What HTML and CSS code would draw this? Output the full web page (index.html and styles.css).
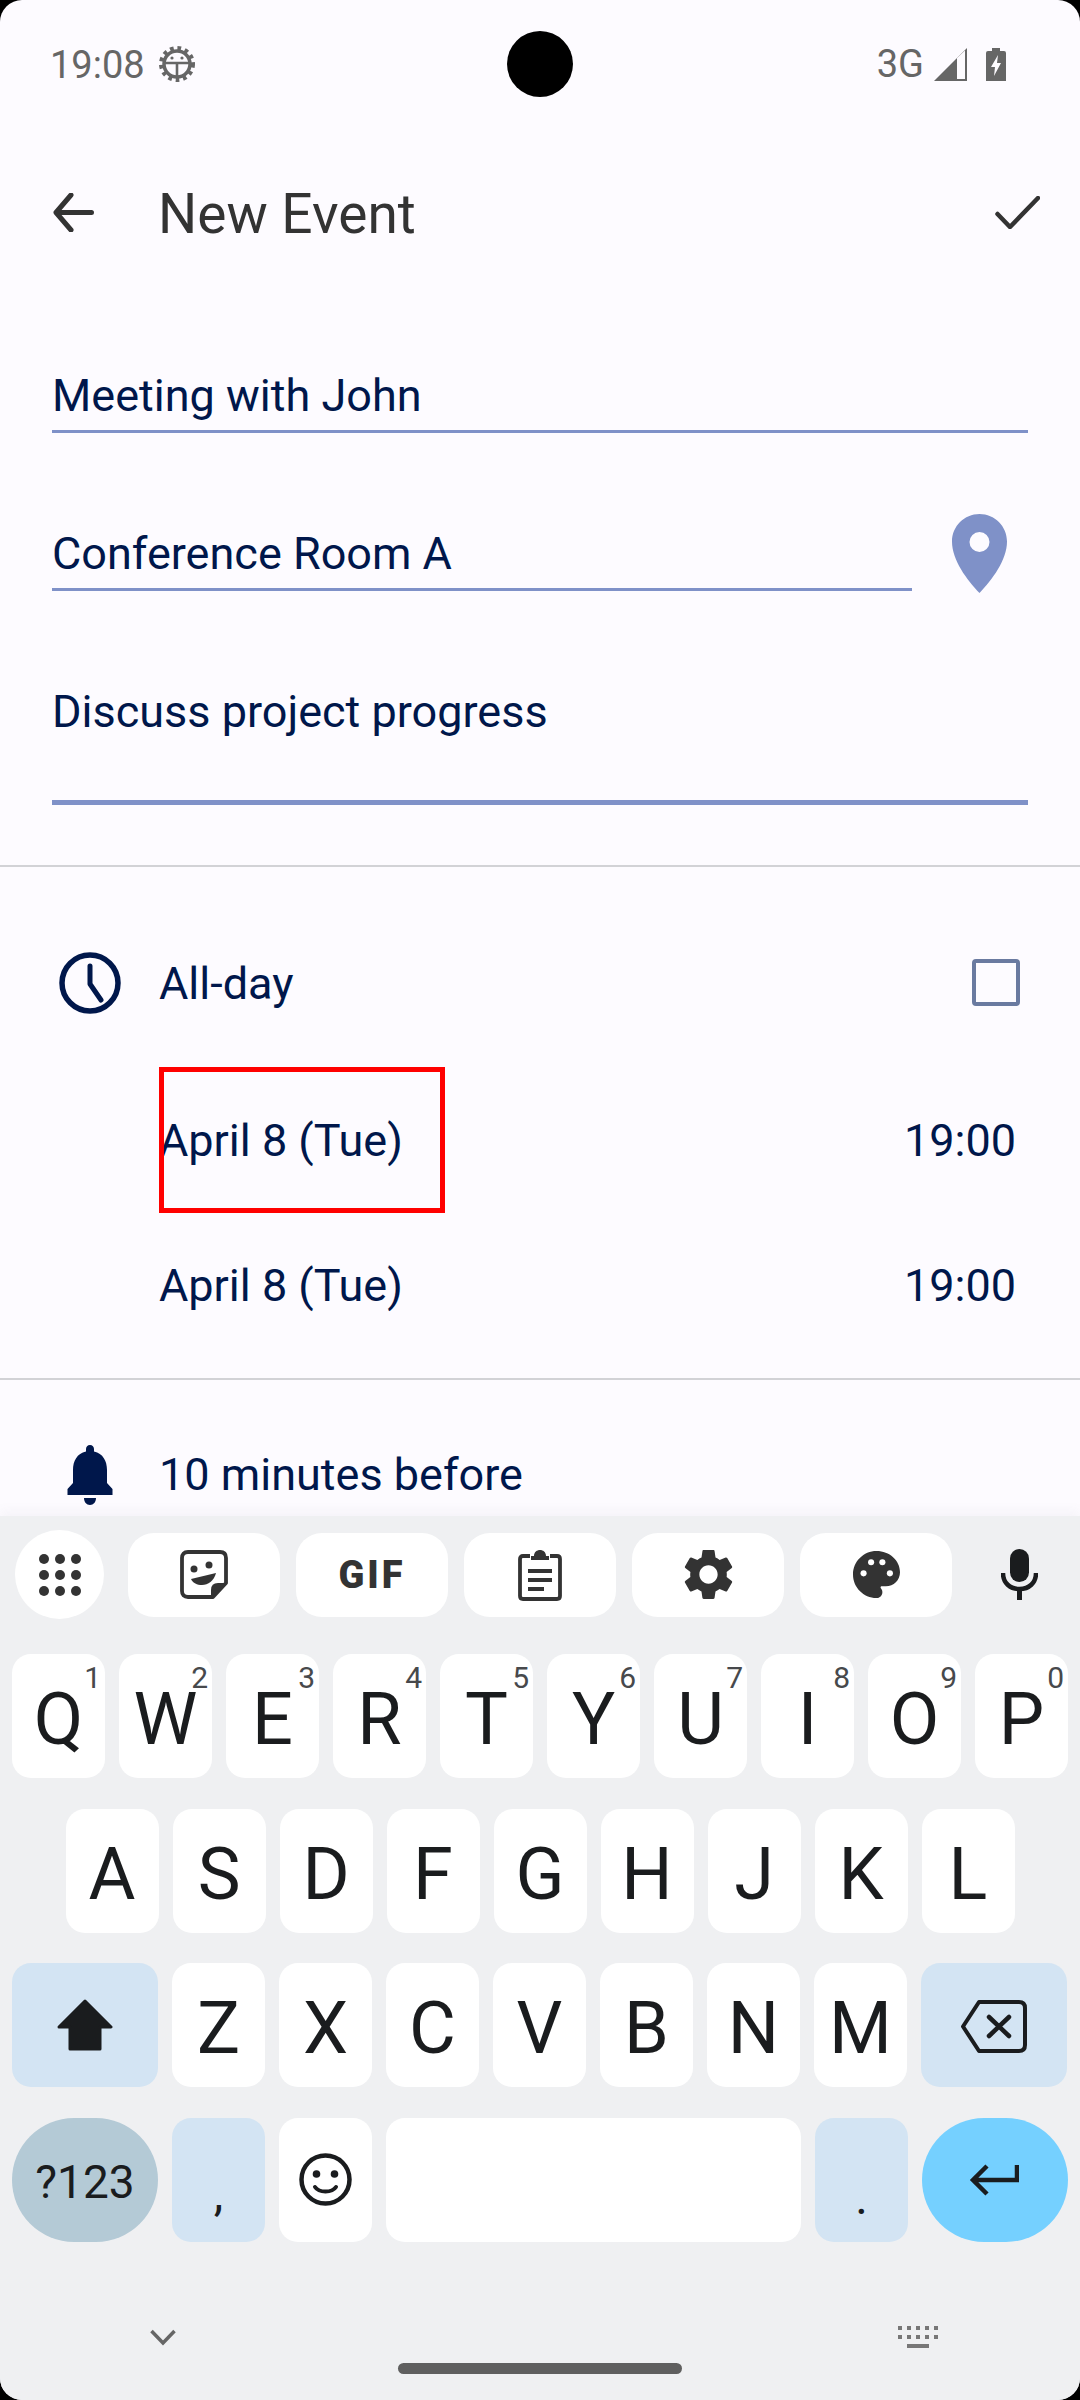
FILE: index.html
```html
<!DOCTYPE html>
<html lang="en">
<head>
<meta charset="utf-8">
<title>New Event</title>
<link rel="stylesheet" href="styles.css">
</head>
<body>
<div class="screen">
  <div class="content">
    <div class="statusbar">
      <span class="clock-text">19:08</span>
      <svg class="gear-status" viewBox="0 0 36 38"><circle cx="18" cy="19" r="15.5" fill="none" stroke="#666" stroke-width="5" stroke-dasharray="3.6 3.7"/><circle cx="18" cy="19" r="13" fill="none" stroke="#666" stroke-width="3.5"/><path d="M5 18H31M18 18V32" fill="none" stroke="#666" stroke-width="2.6"/><circle cx="13" cy="13" r="1.6" fill="#666"/><circle cx="23" cy="13" r="1.6" fill="#666"/></svg>
      <div class="camera"></div>
      <span class="net-text">3G</span>
      <svg class="signal" viewBox="0 0 33 33"><path d="M0 33L33 0V33Z" fill="#666"/><path d="M23 10L31 2.500V31H23Z" fill="#fdfbff"/></svg>
      <svg class="battery" viewBox="0 0 20 33"><path d="M6 0H14V3H18Q20 3 20 5V33H0V5Q0 3 2 3H6Z" fill="#666"/><path d="M12 7L5 19H9L8 28L15 15H11Z" fill="#fdfbff"/></svg>
    </div>

    <div class="appbar">
      <svg class="back" viewBox="0 0 41 39"><path d="M38.5 19.5H4M18 2L3 19.5L18 37" fill="none" stroke="#333" stroke-width="5" stroke-linecap="round" stroke-linejoin="round"/></svg>
      <span class="title">New Event</span>
      <svg class="done" viewBox="0 0 45 33"><path d="M2.5 18L15 31L43 2" fill="none" stroke="#333" stroke-width="4.500" stroke-linecap="round" stroke-linejoin="round"/></svg>
    </div>

    <div class="form">
      <div class="field">Meeting with John</div>
      <div class="field-row">
        <div class="field field-grow">Conference Room A</div>
        <svg class="pin" viewBox="0 0 55 79"><path fill-rule="evenodd" d="M27.5 0C12.3 0 0 12.3 0 27.5C0 46 15 66 27.5 79C40 66 55 46 55 27.5C55 12.3 42.7 0 27.5 0ZM27.5 18A10 10 0 1 1 27.5 38A10 10 0 1 1 27.5 18Z" fill="#7f91c8"/></svg>
      </div>
      <div class="field field-multi">Discuss project progress</div>
    </div>

    <div class="divider divider-first"></div>

    <div class="row row-allday">
      <svg class="row-icon" viewBox="0 0 62 62"><circle cx="31" cy="31" r="28" fill="none" stroke="#00174b" stroke-width="5.5"/><path d="M31 14V32L42 48" fill="none" stroke="#00174b" stroke-width="5" stroke-linecap="round" stroke-linejoin="round"/></svg>
      <span class="row-label">All-day</span>
      <span class="checkbox"></span>
    </div>
    <div class="row row-date">
      <span class="row-label row-label-plain">April 8 (Tue)</span>
      <span class="time">19:00</span>
      <div class="highlight"></div>
    </div>
    <div class="row row-date-end">
      <span class="row-label row-label-plain">April 8 (Tue)</span>
      <span class="time">19:00</span>
    </div>

    <div class="divider divider-second"></div>

    <div class="row row-reminder">
      <svg class="row-icon bell" viewBox="0 0 48 60"><path d="M24 0C21.5 0 20 1.8 20 4V6.500C11 8.500 7 16 7 25V38L1.500 44V50H46.500V44L41 38V25C41 16 37 8.500 28 6.500V4C28 1.800 26.500 0 24 0ZM18 53C18 57 20.500 60 24 60C27.500 60 30 57 30 53Z" fill="#00174b"/></svg>
      <span class="row-label">10 minutes before</span>
    </div>
  </div>

  <div class="keyboard">
    <div class="toolbar">
      <div class="tool-circle">
        <svg class="ic-apps" viewBox="0 0 42 42" fill="#333"><circle cx="5" cy="5" r="5"/><circle cx="21" cy="5" r="5"/><circle cx="37" cy="5" r="5"/><circle cx="5" cy="21" r="5"/><circle cx="21" cy="21" r="5"/><circle cx="37" cy="21" r="5"/><circle cx="5" cy="37" r="5"/><circle cx="21" cy="37" r="5"/><circle cx="37" cy="37" r="5"/></svg>
      </div>
      <div class="tool-btn">
        <svg class="ic-sticker" viewBox="0 0 48 49"><path d="M8 2H40Q46 2 46 8V33L33 47H8Q2 47 2 41V8Q2 2 8 2Z" fill="none" stroke="#333" stroke-width="3.800" stroke-linejoin="round"/><path d="M46 33H38Q31 33 31 40V47Z" fill="#333"/><circle cx="14" cy="19" r="3.500" fill="#333"/><circle cx="29" cy="15" r="3.500" fill="#333"/><path d="M11 29L36 23C34 31 28 35 22 35C17 35 13 33 11 29Z" fill="#333"/></svg>
      </div>
      <div class="tool-btn"><span class="gif">GIF</span></div>
      <div class="tool-btn">
        <svg class="ic-clip" viewBox="0 0 44 52"><path d="M12 7H5Q2 7 2 10V47Q2 50 5 50H39Q42 50 42 47V10Q42 7 39 7H32" fill="none" stroke="#333" stroke-width="3.800"/><path d="M13 11V7H16C16 3 19 1 22 1C25 1 28 3 28 7H31V11Z" fill="#333"/><path d="M10 20H34V24H10ZM10 29H34V33H10ZM10 38H26V42H10Z" fill="#333"/></svg>
      </div>
      <div class="tool-btn">
        <svg class="ic-gear" viewBox="0 0 24 24"><path fill="#333" d="M19.14 12.94c.04-.3.06-.61.06-.94 0-.32-.02-.64-.07-.94l2.03-1.58c.18-.14.23-.41.12-.61l-1.920-3.320c-.12-.22-.37-.29-.59-.22l-2.390.96c-.5-.38-1.030-.7-1.620-.94l-.36-2.540c-.04-.24-.24-.41-.48-.41h-3.840c-.24 0-.43.17-.47.41l-.36 2.540c-.59.24-1.130.57-1.620.94l-2.390-.96c-.22-.08-.47 0-.59.22L2.740 8.870c-.12.21-.08.47.12.61l2.030 1.580c-.05.3-.09.63-.09.94s.02.64.07.94l-2.030 1.580c-.18.14-.23.41-.12.61l1.920 3.320c.12.22.37.29.59.22l2.390-.96c.5.38 1.030.7 1.620.94l.36 2.540c.05.24.24.41.48.41h3.840c.24 0 .44-.17.47-.41l.36-2.540c.59-.24 1.130-.56 1.620-.94l2.390.96c.22.08.47 0 .59-.22l1.920-3.320c.12-.22.07-.47-.12-.61l-2.010-1.580zM12 15.600c-1.980 0-3.600-1.620-3.600-3.600s1.620-3.600 3.600-3.600 3.600 1.620 3.600 3.600-1.620 3.600-3.600 3.600z"/></svg>
      </div>
      <div class="tool-btn">
        <svg class="ic-palette" viewBox="2 2 20 20"><path fill="#333" d="M12 2C6.490 2 2 6.490 2 12s4.490 10 10 10c1.380 0 2.500-1.120 2.500-2.500 0-.61-.23-1.200-.64-1.670-.08-.1-.13-.21-.13-.33 0-.28.22-.5.5-.5H16c3.310 0 6-2.690 6-6 0-4.960-4.490-9-10-9z"/><circle cx="6.500" cy="11.500" r="1.300" fill="#fff"/><circle cx="9.700" cy="6.800" r="1.300" fill="#fff"/><circle cx="14.500" cy="6.800" r="1.300" fill="#fff"/><circle cx="17.700" cy="11.500" r="1.300" fill="#fff"/></svg>
      </div>
      <svg class="ic-mic" viewBox="0 0 37 51"><rect x="9" y="0" width="19" height="33" rx="9.500" fill="#1a1c1e"/><path d="M2 24C2 34 9 40 18.500 40C28 40 35 34 35 24" fill="none" stroke="#1a1c1e" stroke-width="4.500"/><path d="M18.500 40V51" stroke="#1a1c1e" stroke-width="5"/></svg>
    </div>

    <div class="keys">
      <div class="key-row">
        <div class="key">Q<sup class="hint">1</sup></div>
        <div class="key">W<sup class="hint">2</sup></div>
        <div class="key">E<sup class="hint">3</sup></div>
        <div class="key">R<sup class="hint">4</sup></div>
        <div class="key">T<sup class="hint">5</sup></div>
        <div class="key">Y<sup class="hint">6</sup></div>
        <div class="key">U<sup class="hint">7</sup></div>
        <div class="key">I<sup class="hint">8</sup></div>
        <div class="key">O<sup class="hint">9</sup></div>
        <div class="key">P<sup class="hint">0</sup></div>
      </div>
      <div class="key-row key-row-inset">
        <div class="key">A</div><div class="key">S</div><div class="key">D</div><div class="key">F</div><div class="key">G</div><div class="key">H</div><div class="key">J</div><div class="key">K</div><div class="key">L</div>
      </div>
      <div class="key-row">
        <div class="key key-wide key-mod">
          <svg class="ic-shift" viewBox="0 0 56 52"><path d="M28 2L54 28H43V50H13V28H2Z" fill="#1a1c1e" stroke="#1a1c1e" stroke-width="3" stroke-linejoin="round"/></svg>
        </div>
        <div class="key">Z</div><div class="key">X</div><div class="key">C</div><div class="key">V</div><div class="key">B</div><div class="key">N</div><div class="key">M</div>
        <div class="key key-wide key-mod">
          <svg class="ic-back" viewBox="0 0 66 53"><path d="M18 2H58Q64 2 64 8V45Q64 51 58 51H18L2 26.500Z" fill="none" stroke="#1a1c1e" stroke-width="4" stroke-linejoin="round"/><path d="M28 17L48 36M48 17L28 36" fill="none" stroke="#1a1c1e" stroke-width="4.500" stroke-linecap="round"/></svg>
        </div>
      </div>
      <div class="key-row">
        <div class="key key-wide key-pill key-sym">?123</div>
        <div class="key key-mod key-punct key-comma">,</div>
        <div class="key">
          <svg class="ic-smile" viewBox="0 0 53 53"><circle cx="26.500" cy="26.500" r="24" fill="none" stroke="#1a1c1e" stroke-width="4.500"/><circle cx="17.500" cy="21" r="3.800" fill="#1a1c1e"/><circle cx="35.500" cy="21" r="3.800" fill="#1a1c1e"/><path d="M16 34C20 40 33 40 37 34" fill="none" stroke="#1a1c1e" stroke-width="4" stroke-linecap="round"/></svg>
        </div>
        <div class="key key-space"></div>
        <div class="key key-mod key-punct">.</div>
        <div class="key key-wide key-pill key-enter">
          <svg class="ic-enter" viewBox="0 0 50 32"><path d="M48 1V16H4M18 2L4 16L18 30" fill="none" stroke="#1a1c1e" stroke-width="4.500"/></svg>
        </div>
      </div>
    </div>

    <div class="kb-nav">
      <svg class="ic-chevron" viewBox="0 0 26 17"><path d="M1.500 2L13 14L24.500 2" fill="none" stroke="#666" stroke-width="3.500"/></svg>
      <svg class="ic-kbd" viewBox="0 0 40 23" fill="#777"><path d="M0 0h4v4H0zM9 0h4v4H9zM18 0h4v4h-4zM27 0h4v4h-4zM36 0h4v4h-4zM0 9h4v4H0zM9 9h4v4H9zM18 9h4v4h-4zM27 9h4v4h-4zM36 9h4v4h-4zM9 18h22v4H9z"/></svg>
    </div>
    <div class="home-pill"></div>
  </div>
</div>
</body>
</html>
```
FILE: styles.css
```css
* { box-sizing: border-box; }
html, body { margin: 0; padding: 0; background: #000; }
body { width: 1080px; height: 2400px; overflow: hidden; font-family: Roboto, "Liberation Sans", sans-serif; }

.screen { width: 1080px; height: 2400px; border-radius: 22px; overflow: hidden; background: #fdfbff; display: flex; flex-direction: column; }
.content { height: 1516px; flex: none; overflow: hidden; display: flex; flex-direction: column; color: #00174b; }

/* status bar */
.statusbar { height: 128px; flex: none; display: flex; align-items: center; padding: 0 74px 0 50px; color: #666; position: relative; }
.clock-text { font-size: 38px; line-height: 40px; width: 109px; margin-top: 2px; }
.gear-status { width: 36px; height: 38px; }
.camera { position: absolute; left: 507px; top: 31px; width: 66px; height: 66px; border-radius: 50%; background: #000; }
.net-text { margin-left: auto; font-size: 38px; line-height: 40px; margin-right: -1px; }
.signal { width: 33px; height: 33px; margin-left: 11px; }
.battery { width: 20px; height: 33px; margin-left: 19px; }

/* app bar */
.appbar { height: 168px; flex: none; display: flex; align-items: center; padding: 0 40px 0 53px; color: #333; }
.back { width: 41px; height: 39px; }
.title { margin-left: 64px; margin-top: 4px; font-size: 55px; line-height: 60px; flex: 1; }
.done { width: 45px; height: 33px; }

/* form */
.form { padding: 70px 52px 0; display: flex; flex-direction: column; gap: 91px; }
.field { font-size: 45px; line-height: 60px; padding-bottom: 4px; border-bottom: 3px solid #7f91c8; }
.field-row { display: flex; align-items: flex-start; }
.field-grow { width: 860px; flex: none; }
.pin { width: 55px; height: 79px; margin-left: 40px; margin-top: -10px; }
.field-multi { margin-top: -2px; padding-bottom: 58px; border-bottom-width: 5px; }

.divider { height: 2px; background: #d2d2d6; flex: none; }
.divider-first { margin-top: 60px; }
.divider-second { margin-top: 62px; }

/* rows */
.row { height: 60px; flex: none; display: flex; align-items: center; font-size: 45px; line-height: 60px; position: relative; padding: 0 64px 0 159px; }
.row-allday { margin-top: 87px; padding-left: 59px; padding-right: 60px; }
.row-date { margin-top: 97px; justify-content: space-between; }
.row-date-end { margin-top: 85px; justify-content: space-between; }
.row-reminder { margin-top: 65px; padding-left: 66px; }
.row-icon { width: 62px; height: 62px; flex: none; margin-top: -3px; }
.bell { width: 48px; height: 60px; margin-top: 0; }
.row-label { margin-left: 38px; flex: 1; }
.row-label-plain { margin-left: 0; flex: none; }
.row-reminder .row-label { margin-left: 45px; }
.checkbox { width: 48px; height: 47px; border: 4.5px solid #6a7aa0; border-radius: 4px; margin-top: -3px; }
.highlight { position: absolute; left: 159px; top: -44px; width: 286px; height: 146px; border: 5px solid #ff0000; }

/* keyboard */
.keyboard { flex: 1; background: #eff0f2; padding-top: 14px; display: flex; flex-direction: column; box-shadow: 0 -6px 10px rgba(120, 120, 130, .05); position: relative; }
.toolbar { height: 89px; flex: none; display: flex; align-items: center; gap: 16px; padding-left: 15px; }
.tool-circle { width: 89px; height: 89px; border-radius: 50%; background: #fff; margin-right: 8px; display: flex; align-items: center; justify-content: center; }
.tool-btn { width: 152px; height: 84px; border-radius: 26px; background: #fff; display: flex; align-items: center; justify-content: center; }
.ic-apps { width: 42px; height: 42px; }
.ic-sticker { width: 48px; height: 49px; }
.gif { font-size: 38px; font-weight: 900; line-height: 40px; color: #333; letter-spacing: 3px; }
.ic-clip { width: 44px; height: 52px; }
.ic-gear { width: 61px; height: 61px; }
.ic-palette { width: 47px; height: 47px; }
.ic-mic { width: 37px; height: 51px; margin-left: 33px; }

.keys { margin-top: 35px; display: flex; flex-direction: column; gap: 30.67px; }
.key-row { height: 124px; display: flex; gap: 14px; padding: 0 12px; }
.key-row-inset { padding: 0 65.5px; }
.key { width: 93px; flex: none; background: #fff; border-radius: 19px; display: flex; align-items: center; justify-content: center; position: relative; font-size: 72px; line-height: 124px; color: #1a1c1e; padding-top: 8px; }
.hint { position: absolute; top: 6px; right: 4px; font-size: 30px; line-height: 36px; color: #47494c; vertical-align: baseline; }
.key-wide { width: 146px; }
.key-mod { background: #d3e4f3; }
.key-pill { border-radius: 62px; }
.key-sym { background: #b4cad6; font-size: 46px; padding-top: 4px; }
.key-enter { background: #75d0ff; padding-top: 0; }
.key-space { flex: 1; padding-top: 0; }
.key-punct { font-size: 48px; align-items: flex-end; line-height: 60px; padding: 0 0 14px; }
.key-comma { padding-bottom: 18px; }
.ic-shift { width: 56px; height: 52px; margin-top: -8px; }
.ic-back { width: 66px; height: 53px; margin-top: -6px; }
.ic-smile { width: 53px; height: 53px; margin-top: -8px; }
.ic-enter { width: 50px; height: 32px; margin-right: 2px; }

.kb-nav { margin-top: 84px; height: 23px; display: flex; align-items: center; justify-content: space-between; padding: 0 142px 0 150px; flex: none; }
.ic-chevron { width: 26px; height: 17px; }
.ic-kbd { width: 40px; height: 23px; }
.home-pill { width: 284px; height: 11px; border-radius: 6px; background: #5f5f5f; margin: 14px auto 0; flex: none; }
```
